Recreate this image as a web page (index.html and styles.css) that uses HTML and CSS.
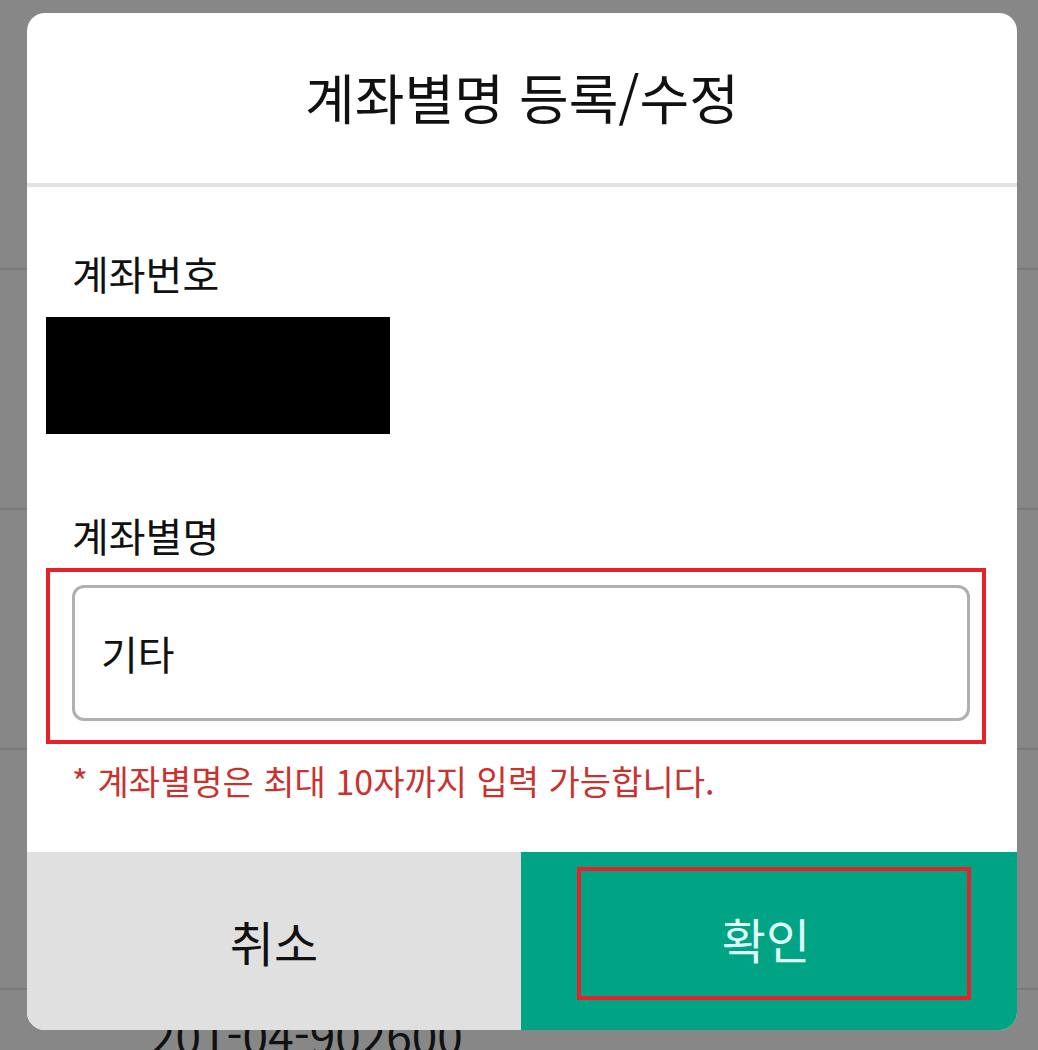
FILE: index.html
```html
<!DOCTYPE html>
<html lang="ko">
<head>
<meta charset="utf-8">
<title>계좌별명 등록/수정</title>
<link rel="stylesheet" href="styles.css">
</head>
<body>
<div class="page">
  <div class="list">
    <div class="row row-first"></div>
    <div class="row"></div>
    <div class="row"></div>
    <div class="row"></div>
    <div class="row row-last"><span class="acct">201-04-902600</span></div>
  </div>

  <div class="dialog">
    <div class="dialog-header">계좌별명 등록/수정</div>
    <div class="dialog-body">
      <div class="label">계좌번호</div>
      <div class="redacted"></div>
      <div class="label label-second">계좌별명</div>
      <div class="highlight">
        <div class="input">기타</div>
      </div>
      <div class="note">* 계좌별명은 최대 10자까지 입력 가능합니다.</div>
    </div>
    <div class="dialog-buttons">
      <div class="btn btn-cancel">취소</div>
      <div class="btn btn-ok"><div class="ok-frame">확인</div></div>
    </div>
  </div>
</div>
</body>
</html>
```

FILE: styles.css
```css
* { box-sizing: border-box; }
html, body {
  margin: 0;
  padding: 0;
}
body {
  width: 1038px;
  height: 1050px;
  overflow: hidden;
  background: #878787;
  font-family: "Noto Sans CJK KR", "Noto Sans", sans-serif;
  color: #111;
}
.page {
  position: relative;
  width: 1038px;
  height: 1050px;
  overflow: hidden;
}
.list {
  display: flex;
  flex-direction: column;
}
.row {
  height: 240px;
  border-bottom: 2px solid #7a7a7a;
}
.row-first { height: 270px; }
.row-last {
  border-bottom: none;
  height: 60px;
  padding: 14px 0 0 150px;
}
.acct {
  display: block;
  font-size: 46px;
  line-height: 60px;
  color: #111;
}

.dialog {
  position: absolute;
  left: 27px;
  top: 13px;
  width: 990px;
  height: 1017px;
  background: #fff;
  border-radius: 18px;
  overflow: hidden;
  display: flex;
  flex-direction: column;
}
.dialog-header {
  height: 174px;
  border-bottom: 4px solid #e1e1e1;
  display: flex;
  align-items: center;
  justify-content: center;
  font-size: 54px;
  color: #111;
  padding-bottom: 4px;
}
.dialog-body {
  flex: 1;
  padding: 59px 31px 0 19px;
  display: flex;
  flex-direction: column;
  align-items: flex-start;
}
.label {
  font-size: 40px;
  line-height: 54px;
  margin-left: 26px;
  color: #111;
}
.redacted {
  width: 344px;
  height: 117px;
  background: #000;
  margin-top: 17px;
}
.label-second {
  margin-top: 74px;
}
.highlight {
  align-self: stretch;
  margin-top: 6px;
  border: 4px solid #e8202a;
  padding: 13px 12px 19px 22px;
}
.input {
  height: 136px;
  border: 3px solid #b0b0b0;
  border-radius: 12px;
  display: flex;
  align-items: center;
  padding-left: 26px;
  font-size: 40px;
  color: #111;
}
.note {
  margin: 14px 0 0 26px;
  font-size: 34px;
  line-height: 46px;
  color: #c8332f;
}
.dialog-buttons {
  height: 178px;
  display: flex;
}
.btn {
  display: flex;
  align-items: center;
  justify-content: center;
  font-size: 48px;
}
.btn-cancel {
  width: 494px;
  background: #e0e0e0;
  color: #111;
}
.btn-ok {
  width: 496px;
  background: #00a383;
  color: #dffcf6;
  padding: 15px 46px 30px 56px;
  align-items: stretch;
}
.ok-frame {
  flex: 1;
  border: 4px solid #e8202a;
  display: flex;
  align-items: center;
  justify-content: center;
  padding: 8px 16px 0 0;
}
```
